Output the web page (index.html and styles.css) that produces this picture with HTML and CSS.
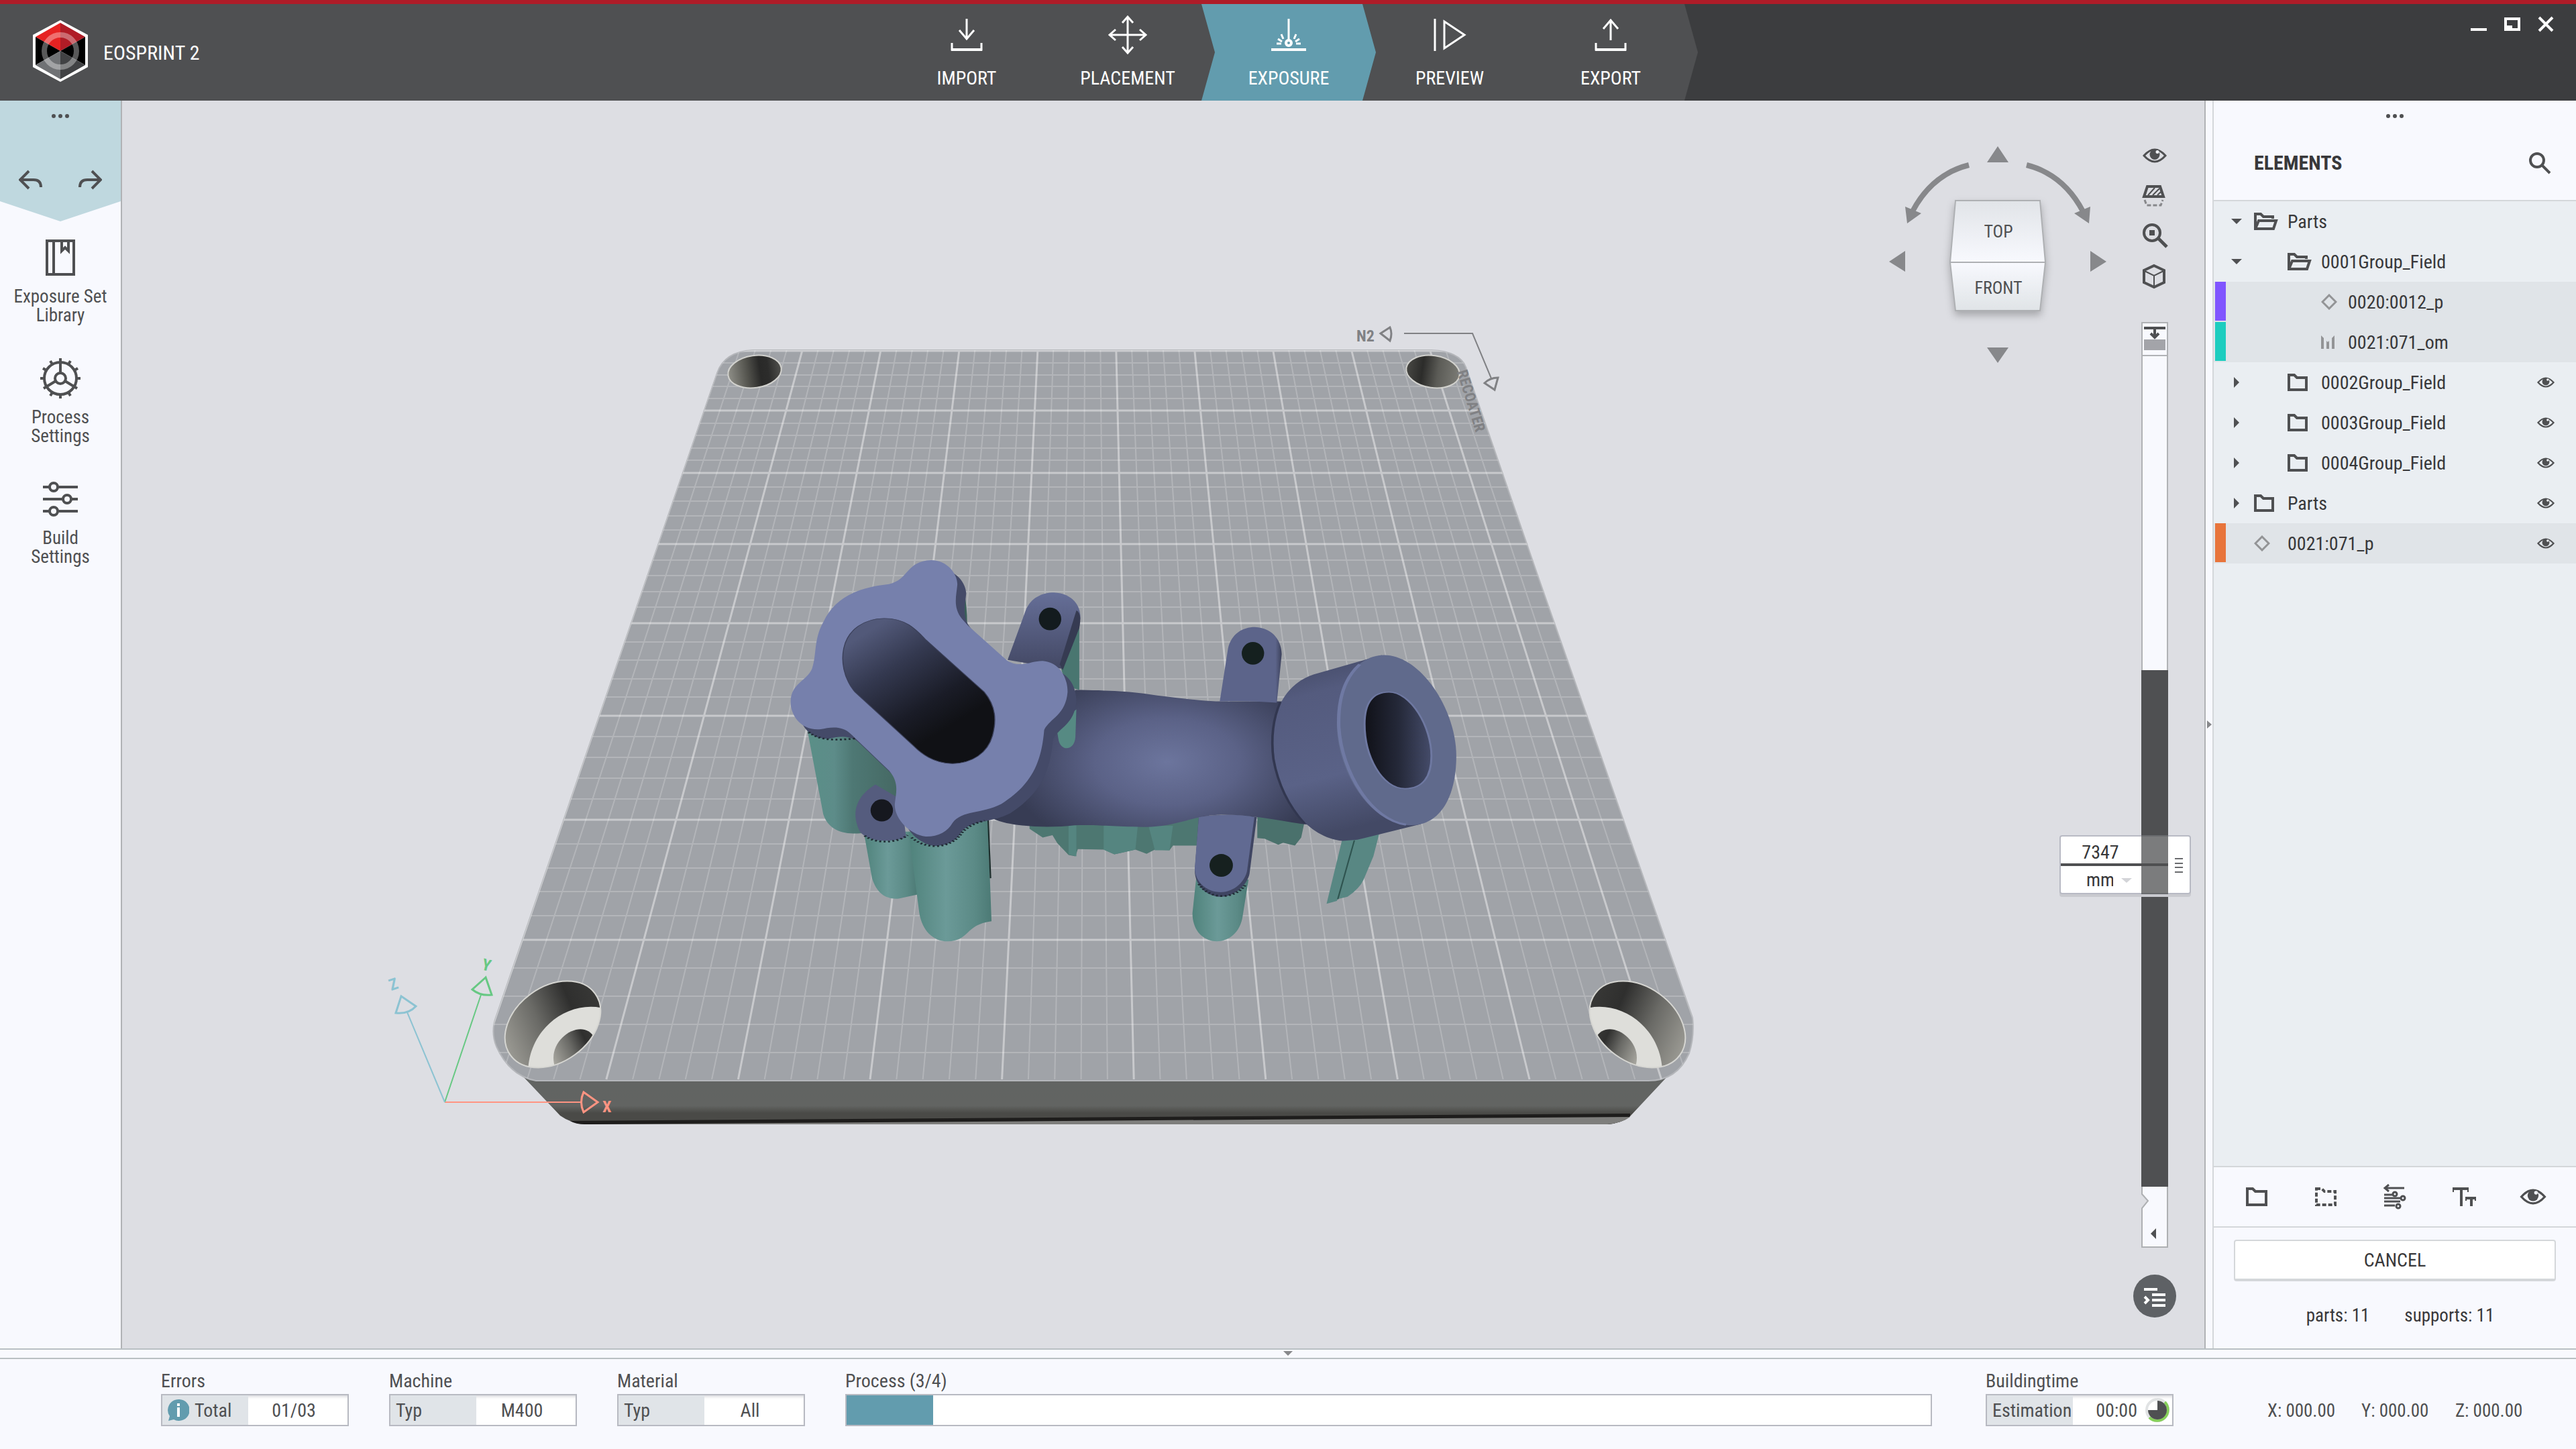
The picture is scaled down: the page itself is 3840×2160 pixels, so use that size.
FILE: index.html
```html
<!DOCTYPE html>
<html lang="en">
<head>
<meta charset="utf-8">
<meta name="viewport" content="width=device-width, initial-scale=1">
<title>EOSPRINT 2</title>
<link rel="stylesheet" href="styles.css">
</head>
<body>
<svg class="defs" width="0" height="0" aria-hidden="true">
  <symbol id="i-eye" viewBox="0 0 36 22"><path d="M2 11Q18-7 34 11Q18 29 2 11Z" fill="none" stroke="currentColor" stroke-width="3"/><circle cx="18" cy="9.500" r="7.500" fill="currentColor"/><circle cx="22" cy="5.500" r="2.500" fill="#eef0f4"/></symbol>
  <symbol id="i-folder" viewBox="0 0 36 26"><path d="M2 2H10L14 6H28V24H2Z" fill="none" stroke="currentColor" stroke-width="4"/></symbol>
  <symbol id="i-open" viewBox="0 0 36 26"><path d="M2 24V2H10L14 6H28V9M2 24L7 12H33L29 24Z" fill="none" stroke="currentColor" stroke-width="4"/></symbol>
  <symbol id="i-diamond" viewBox="0 0 24 24"><path d="M12 2L22 12L12 22L2 12Z" fill="none" stroke="#939496" stroke-width="3"/></symbol>
  <symbol id="i-support" viewBox="0 0 24 24"><path d="M0 2L4 6V22H0ZM8 10L10 12L12 10V22H8ZM20 2V22H16V6Z" fill="#939496"/></symbol>
  <symbol id="i-down" viewBox="0 0 16 16"><path d="M0 4H16L8 12Z" fill="currentColor"/></symbol>
  <symbol id="i-right" viewBox="0 0 16 16"><path d="M4 0V16L12 8Z" fill="currentColor"/></symbol>
  <symbol id="i-dots" viewBox="0 0 28 8"><circle cx="4" cy="4" r="3" fill="currentColor"/><circle cx="14" cy="4" r="3" fill="currentColor"/><circle cx="24" cy="4" r="3" fill="currentColor"/></symbol>
</svg>

<header class="topbar">
  <div class="brand">
    <svg class="logo" viewBox="0 0 84 94" aria-hidden="true">
      <path d="M42 1L83 23V71L42 93L1 71V23Z" fill="#fff"/>
      <path d="M42 5L79 26L42 47Z" fill="#b01c26"/><path d="M42 5L5 26L42 47Z" fill="#e62222"/>
      <path d="M5 26L42 47L5 68ZM79 26L42 47L79 68Z" fill="#000"/>
      <path d="M5 68L42 47V89Z" fill="#707275"/><path d="M79 68L42 47V89Z" fill="#414244"/>
      <circle cx="42" cy="47" r="24" fill="none" stroke="#fff" stroke-opacity=".35" stroke-width="8"/>
    </svg>
    <span class="brand-name">EOSPRINT 2</span>
  </div>
  <nav class="steps" aria-label="Workflow">
    <button class="step"><svg viewBox="0 0 60 60"><path d="M30 6V36M19 23L30 36L41 23M8 42V52H52V42" fill="none" stroke="#fff" stroke-width="3"/><path d="M7 50H53V54H7Z" fill="#fff"/></svg>IMPORT</button>
    <button class="step"><svg viewBox="0 0 60 60"><path d="M30 4V56M3 30H57M22 12L30 3L38 12M22 48L30 57L38 48M12 22L3 30L12 38M48 22L57 30L48 38" fill="none" stroke="#fff" stroke-width="3"/></svg>PLACEMENT</button>
    <button class="step step-on"><svg viewBox="0 0 60 60"><path d="M30 6V38M22 36L19 29M38 36L41 29M20 40L14 36M40 40L46 36M19 43H12M41 43H48" fill="none" stroke="#fff" stroke-width="3"/><circle cx="30" cy="42" r="4" fill="none" stroke="#fff" stroke-width="4"/><path d="M4 50H56V54H4Z" fill="#fff"/></svg>EXPOSURE</button>
    <button class="step"><svg viewBox="0 0 60 60"><path d="M8 6V54M22 10V50L52 30Z" fill="none" stroke="#fff" stroke-width="3"/></svg>PREVIEW</button>
    <button class="step"><svg viewBox="0 0 60 60"><path d="M30 8V38M19 21L30 8L41 21M8 42V52H52V42" fill="none" stroke="#fff" stroke-width="3"/><path d="M7 50H53V54H7Z" fill="#fff"/></svg>EXPORT</button>
  </nav>
  <div class="window-controls">
    <button aria-label="Minimize"><svg viewBox="0 0 24 24"><path d="M0 18H24V22H0Z" fill="#fff"/></svg></button>
    <button aria-label="Restore"><svg viewBox="0 0 24 24"><path d="M2 4H22V20H2ZM2 16H10V20" fill="none" stroke="#fff" stroke-width="4"/></svg></button>
    <button aria-label="Close"><svg viewBox="0 0 24 24"><path d="M2 2L22 22M22 2L2 22" fill="none" stroke="#fff" stroke-width="4"/></svg></button>
  </div>
</header>

<main class="workspace">
  <aside class="sidebar">
    <div class="history">
      <svg class="dots"><use href="#i-dots"/></svg>
      <div class="history-buttons">
        <button aria-label="Undo"><svg viewBox="0 0 36 32"><path d="M15 2L2 15L15 28M2 15H22Q33 15 33 26" fill="none" stroke="currentColor" stroke-width="4"/></svg></button>
        <button aria-label="Redo"><svg viewBox="0 0 36 32"><path d="M21 2L34 15L21 28M34 15H14Q3 15 3 26" fill="none" stroke="currentColor" stroke-width="4"/></svg></button>
      </div>
    </div>
    <button class="tool"><svg viewBox="0 0 60 60"><path d="M10 5H50V55H10ZM20 5V55M32 5V20L37 15L42 20V5" fill="none" stroke="currentColor" stroke-width="4"/></svg>Exposure Set Library</button>
    <button class="tool"><svg viewBox="0 0 60 60"><g fill="none" stroke="currentColor" stroke-width="4"><circle cx="30" cy="30" r="24"/><circle cx="30" cy="30" r="8"/><path d="M30 0V22M23 34L5 45M37 34L55 45M0 30H6M54 30H60M30 54V60M15 4L18 9M45 4L42 9M4 15L9 18M56 15L51 18M15 56L18 51M45 56L42 51"/></g></svg>Process Settings</button>
    <button class="tool"><svg viewBox="0 0 60 60"><g fill="none" stroke="currentColor" stroke-width="4"><path d="M4 12H13M27 12H56M4 30H33M47 30H56M4 48H13M27 48H56"/><circle cx="20" cy="12" r="6"/><circle cx="40" cy="30" r="6"/><circle cx="20" cy="48" r="6"/></g></svg>Build Settings</button>
  </aside>

  <section class="viewport" aria-label="Build platform">
    <svg class="scene" viewBox="182 150 3104 1860" preserveAspectRatio="xMidYMid slice">
      <defs>
        <linearGradient id="bore"><stop offset="0" stop-color="#8f8f88"/><stop offset=".35" stop-color="#55554f"/><stop offset=".6" stop-color="#292928"/><stop offset=".75" stop-color="#2c2c2b"/><stop offset="1" stop-color="#50504d"/></linearGradient>
        <linearGradient id="bore-r"><stop offset="0" stop-color="#484844"/><stop offset=".3" stop-color="#2c2c2a"/><stop offset=".6" stop-color="#5c5c57"/><stop offset="1" stop-color="#7b7b75"/></linearGradient>
        <linearGradient id="deep" x1="0" y1=".7" x2="1" y2=".3"><stop offset="0" stop-color="#a5a49d"/><stop offset=".4" stop-color="#6a6a66"/><stop offset=".7" stop-color="#2f2f2e"/><stop offset="1" stop-color="#3b3b39"/></linearGradient>
        <linearGradient id="front" x2="0" y2="1"><stop offset="0" stop-color="#616462"/><stop offset=".75" stop-color="#626462"/><stop offset=".85" stop-color="#4a4a47"/><stop offset="1" stop-color="#4a4a47"/></linearGradient>
        <radialGradient id="body" gradientUnits="userSpaceOnUse" cx="880" cy="820" r="330"><stop offset="0" stop-color="#6c759d"/><stop offset=".45" stop-color="#5b6287"/><stop offset="1" stop-color="#373c54"/></radialGradient>
        <linearGradient id="slot" gradientUnits="userSpaceOnUse" x1="240" y1="400" x2="490" y2="640"><stop offset="0" stop-color="#525979"/><stop offset=".35" stop-color="#343950"/><stop offset=".75" stop-color="#1a1c27"/><stop offset="1" stop-color="#101115"/></linearGradient>
        <linearGradient id="collar" x2=".2" y2="1"><stop offset="0" stop-color="#3f4560"/><stop offset=".25" stop-color="#545b7e"/><stop offset=".7" stop-color="#5a6287"/><stop offset="1" stop-color="#434965"/></linearGradient>
        <linearGradient id="pipe"><stop offset="0" stop-color="#101118"/><stop offset=".5" stop-color="#242838"/><stop offset="1" stop-color="#454c6a"/></linearGradient>
        <linearGradient id="lug" x2="0" y2="1"><stop offset="0" stop-color="#666f98"/><stop offset="1" stop-color="#434864"/></linearGradient>
        <linearGradient id="lug2"><stop offset="0" stop-color="#5c648a"/><stop offset=".9" stop-color="#5c648a"/><stop offset="1" stop-color="#3b405a"/></linearGradient>
        <linearGradient id="teal"><stop offset="0" stop-color="#4f827b"/><stop offset=".45" stop-color="#6b9a98"/><stop offset=".8" stop-color="#5b8a86"/><stop offset="1" stop-color="#4c7a75"/></linearGradient>
        <linearGradient id="teal-d"><stop offset="0" stop-color="#5a8f87"/><stop offset=".3" stop-color="#5d8c89"/><stop offset=".5" stop-color="#4e7874"/><stop offset="1" stop-color="#456863"/></linearGradient>
        <clipPath id="plate-clip"><path d="M1122 522H2134Q2176 524 2185 547L2293 860L2523 1517Q2526 1545 2518 1570Q2500 1611 2457 1611H799Q760 1604 740 1560Q732 1540 738 1520L1069 556Q1080 524 1122 522Z"/></clipPath>
        <clipPath id="hole-clip"><ellipse cx="824" cy="1527" rx="78" ry="56" transform="rotate(-36 824 1527)"/></clipPath>
        <path id="flange" d="M396 127C430 127 450 175 450 210C448 250 440 290 460 330L472 352L552 472C580 500 600 472 625 473C660 478 676 530 676 580C672 660 640 670 628 710C622 830 600 900 540 965C500 1000 460 985 440 1030C430 1060 410 1078 385 1077C350 1070 318 1010 322 960C325 920 330 890 310 850L232 725C215 695 190 700 170 708C130 715 108 660 108 615C108 550 140 545 152 500C162 450 155 400 175 340C200 250 250 220 310 209C350 195 345 130 396 127Z"/>
        <g id="bore-big">
          <g clip-path="url(#hole-clip)">
            <path d="M740 1450H910V1610H740Z" fill="url(#deep)"/>
            <path d="M900 1503C845 1490 787 1535 787 1600H910Z" fill="#dededa"/>
            <path d="M886 1547C868 1512 804 1555 832 1600H900Z" fill="url(#deep)"/>
          </g>
          <ellipse cx="824" cy="1527" rx="78" ry="56" transform="rotate(-36 824 1527)" fill="none" stroke="#d6d6d2" stroke-width="2"/>
        </g>
      </defs>

      <!-- build plate -->
      <path d="M742 1565L835 1663Q850 1674 872 1676H2396Q2418 1674 2430 1664L2518 1570L2457 1600H799Z" fill="url(#front)"/>
      <path d="M850 1671Q858 1676 872 1676H2396Q2418 1674 2430 1664V1660L850 1671Z" fill="#1e1d1c"/>
      <path d="M880 1676H2396Q2418 1674 2430 1665L880 1676Z" fill="#7e7e7c"/>
      <path d="M1122 522H2134Q2176 524 2185 547L2293 860L2523 1517Q2526 1545 2518 1570Q2500 1611 2457 1611H799Q760 1604 740 1560Q732 1540 738 1520L1069 556Q1080 524 1122 522Z" fill="#a0a3a8" stroke="#b4b6ba" stroke-width="2"/>
      <g clip-path="url(#plate-clip)" fill="none">
        <path id="grid-minor" stroke="#fff" stroke-opacity=".2" stroke-width="2"/>
        <path id="grid-major" stroke="#fff" stroke-opacity=".42" stroke-width="3"/>
      </g>
      <ellipse cx="1125" cy="554" rx="40" ry="24" transform="rotate(-8 1125 554)" fill="url(#bore)" stroke="#d2d2ce" stroke-width="2"/>
      <ellipse cx="2136" cy="554" rx="40" ry="24" transform="rotate(8 2136 554)" fill="url(#bore-r)" stroke="#d2d2ce" stroke-width="2"/>
      <use href="#bore-big"/>
      <use href="#bore-big" transform="translate(3265 0) scale(-1 1)"/>

      <!-- manifold with its supports -->
      <g transform="translate(1100 780) scale(.727 .4337)">
        <g>
          <path d="M140 690L175 1000C185 1050 210 1070 250 1066L330 1060V860L240 730Z" fill="url(#teal-d)"/>
          <path d="M258 1060L275 1220C285 1275 305 1294 330 1290L368 1276L352 1060Z" fill="url(#teal)"/>
          <path d="M448 180Q470 220 470 350L440 300Z" fill="#3a6059"/>
          <path d="M598 1030V1050L625 1080L645 1072L655 1100L678 1140L692 1145L697 1120L750 1122L772 1138L815 1122L838 1136L855 1122L885 1124L892 1108L942 1108L950 1010Z" fill="#4d7771"/>
          <path d="M678 1038H694V1145L678 1138ZM750 1038H820L815 1122L772 1138L750 1122ZM842 1040H892L885 1124H855Z" fill="#558580"/>
          <path d="M1065 1000V1082L1080 1084L1108 1105L1118 1098L1142 1108L1155 1080L1162 1025Z" fill="#4a716c"/>
          <path d="M940 1215L932 1340C932 1465 1025 1470 1035 1350L1047 1225Z" fill="url(#teal)"/>
          <path d="M1240 1080L1207 1308L1228 1298L1230 1292L1250 1284Q1275 1255 1283 1225L1303 1145L1316 1060Z" fill="#588783"/>
          <path d="M1264 1090L1230 1292" stroke="#2f5450" stroke-width="3"/>
        </g>
        <path d="M692 573C760 574 810 578 860 592C910 602 950 610 980 612H1120L1170 1036C1130 1030 1060 1000 990 1002C930 1005 900 1045 830 1044C760 1042 740 1036 690 1038C640 1048 560 1045 523 1015C560 960 620 850 640 720Z" fill="url(#body)"/>
        <path d="M988 612L1005 430C1012 380 1035 357 1060 357C1100 360 1115 410 1115 450L1105 617Q1045 608 988 612Z" fill="url(#lug2)"/>
        <ellipse cx="1056" cy="447" rx="23" ry="39" fill="#15201f"/>
        <path d="M700 330L700 573L672 560L660 480Z" fill="#497670"/>
        <path d="M694 640L692 735C690 785 660 785 657 740L652 690Z" fill="#568a83"/>
        <path d="M553 470L590 300C600 255 625 238 648 238C690 242 704 290 702 330L664 500L625 490Z" fill="url(#lug)"/>
        <path d="M694 300Q706 310 700 360L666 505L660 485Z" fill="#363b52"/>
        <ellipse cx="640" cy="329" rx="23" ry="39" fill="#131b1e"/>
        <path d="M1320 453L1180 520C1110 560 1090 680 1100 800C1110 960 1170 1080 1240 1092L1270 1088L1400 1034Z" fill="url(#collar)"/>
        <path d="M1112 615Q1090 700 1098 810Q1112 940 1162 1032" fill="none" stroke="#323750" stroke-width="5"/>
        <path d="M1325 453C1400 453 1473 640 1473 800C1473 940 1440 1038 1380 1038C1300 1038 1228 860 1228 690C1228 550 1270 453 1325 453Z" fill="#606a8c"/>
        <path d="M1275 485C1245 530 1230 600 1232 700C1238 860 1300 1020 1370 1036" fill="none" stroke="#6f79a3" stroke-width="7"/>
        <path d="M1335 580C1380 580 1422 700 1422 800C1422 870 1405 912 1368 912C1320 912 1285 800 1285 690C1285 620 1300 580 1335 580Z" fill="url(#pipe)" stroke="#6e78a1" stroke-width="4"/>
        <path d="M282 898C240 940 232 1000 250 1060C265 1090 300 1102 345 1080L335 950Z" fill="#555c7e"/>
        <ellipse cx="295" cy="987" rx="23" ry="38" fill="#16181f"/>
        <path d="M945 1010L937 1190C935 1240 960 1284 990 1284C1020 1284 1045 1240 1049 1205L1064 1010C1030 1000 985 1000 945 1010Z" fill="#3f4562"/>
        <path d="M945 1010L937 1180C935 1230 960 1268 990 1268C1018 1268 1040 1230 1044 1195L1059 1010C1030 1000 985 1000 945 1010Z" fill="#616a92"/>
        <ellipse cx="991" cy="1176" rx="24" ry="39" fill="#16201f"/>
        <path d="M350 1060L372 1340C378 1400 400 1437 430 1437C475 1437 465 1380 520 1368L512 1010L440 1050Z" fill="url(#teal)"/>
        <path d="M513 1018L518 1220" stroke="#1c2e2c" stroke-width="3"/>
        <use href="#flange" transform="translate(18 32)" fill="#444a68"/>
        <use href="#flange" fill="#7680ac"/>
        <path d="M300 327C345 327 365 365 385 400L505 580C530 630 530 680 522 730C512 790 480 825 440 826C400 825 375 790 360 765L240 580C215 530 212 470 217 430C225 365 260 327 300 327Z" fill="url(#slot)" stroke="#3b405a" stroke-width="2"/>
        <g fill="none" stroke="#1f2a33" stroke-width="6" stroke-dasharray="4 5">
          <path d="M145 718C170 750 205 745 240 740"/><path d="M260 1074C285 1106 330 1096 348 1072"/><path d="M356 1080C390 1128 440 1115 460 1062Q475 1035 506 1022"/><path d="M945 1240C970 1298 1020 1292 1042 1240"/>
        </g>
      </g>

      <!-- axes -->
      <g fill="none" stroke-width="2">
        <g stroke="#ff9482"><path d="M663 1643H866"/><path d="M870 1628Q863 1643 870 1658L891 1643Z" stroke-width="3"/></g>
        <g stroke="#67c883"><path d="M663 1643L717 1483"/><path d="M724 1457L704 1475Q716 1485 733 1483Z" stroke-width="3"/></g>
        <g stroke="#8cc3d2"><path d="M663 1643L607 1509"/><path d="M598 1485L620 1500Q609 1512 590 1510Z" stroke-width="3"/></g>
        <g stroke="#808184"><path d="M2093 497H2195L2223 564"/><path d="M2058 497L2072 488Q2076 497 2072 508ZM2213 571Q2221 563 2233 563L2228 581Z" stroke-width="3"/></g>
      </g>
      <g class="scene-text">
        <text x="898" y="1658" fill="#ff9482">X</text>
        <text x="717" y="1445" fill="#67c883" transform="rotate(14 717 1445)">Y</text>
        <text x="583" y="1477" fill="#8cc3d2" transform="rotate(-18 583 1477)">Z</text>
        <text x="2022" y="509" fill="#808184">N2</text>
        <text class="small" x="2172" y="554" fill="#808184" transform="rotate(73 2172 554)">RECOATER</text>
      </g>
    </svg>

    <svg class="nav-cube" viewBox="2806 200 344 350" role="img" aria-label="View cube">
      <defs>
        <linearGradient id="cube-t" x2="0" y2="1"><stop offset="0" stop-color="#e1e4e8"/><stop offset="1" stop-color="#f8f9fe"/></linearGradient>
        <linearGradient id="cube-f" x2="0" y2="1"><stop offset="0" stop-color="#f8f9fe"/><stop offset="1" stop-color="#e0e4e7"/></linearGradient>
      </defs>
      <g fill="#87888b"><path d="M2978 218L2994 242H2962ZM2978 541L2994 518H2962ZM2816 390L2840 374V405ZM3140 390L3116 374V405ZM3116 308L3092 318L3114 333ZM2840 308L2864 318L2843 333Z"/></g>
      <path d="M3021 246Q3076 260 3105 315M2935 246Q2880 260 2851 315" fill="none" stroke="#87888b" stroke-width="8"/>
      <g class="cube" stroke="#aeb0b3" stroke-width="2"><path d="M2907 391H3049L3041 463H2915Z" fill="url(#cube-f)"/><path d="M2915 299H3041L3049 391H2907Z" fill="url(#cube-t)"/></g>
      <text x="2979" y="354">TOP</text><text x="2979" y="438">FRONT</text>
    </svg>

    <div class="view-tools">
      <button aria-label="Visibility"><svg viewBox="0 0 40 40"><use href="#i-eye" x="2" y="9" width="36" height="22"/></svg></button>
      <button aria-label="Clipping"><svg viewBox="0 0 40 40"><path d="M9 6H28L33 21H4Z" fill="none" stroke="currentColor" stroke-width="4"/><path d="M10 19L20 8M17 19L27 9M24 19L29 14" stroke="currentColor" stroke-width="2"/><path d="M5 26L8 34H29L32 26" fill="none" stroke="#87888b" stroke-width="3" stroke-dasharray="6 3"/></svg></button>
      <button aria-label="Zoom to fit"><svg viewBox="0 0 40 40"><circle cx="16" cy="15" r="12" fill="none" stroke="currentColor" stroke-width="4"/><path d="M12 11H20V19H12Z" fill="currentColor"/><path d="M25 23L38 36" stroke="currentColor" stroke-width="5"/></svg></button>
      <button aria-label="Isometric view"><svg viewBox="0 0 40 40"><path d="M19 4L34 11V29L19 36L4 29V11Z" fill="none" stroke="currentColor" stroke-width="4"/><path d="M5 12L19 19L33 12M19 19V35" fill="none" stroke="currentColor" stroke-width="2"/></svg></button>
    </div>

    <div class="layer-slider">
      <button class="slider-cap" aria-label="Collapse"><svg viewBox="0 0 36 47"><path d="M2 5H34V9H2Z" fill="#4f5052"/><path d="M18 8V20M12 15L18 21L24 15" fill="none" stroke="#4f5052" stroke-width="4"/><path d="M2 24H34V40H2Z" fill="#a3a4a9"/></svg></button>
      <div class="slider-above"></div>
      <div class="slider-below">
        <div class="layer-popup">
          <input class="layer-value" type="text" value="7347" aria-label="Layer height">
          <div class="layer-rule"></div>
          <div class="layer-unit"><select aria-label="Unit"><option>mm</option></select><svg viewBox="0 0 16 8"><path d="M0 1H16L8 8Z" fill="#d3d4d8"/></svg></div>
          <svg class="grip" viewBox="0 0 12 22"><path d="M0 1H12M0 8H12M0 14H12M0 21H12" stroke="#6a6b6e" stroke-width="2"/></svg>
        </div>
      </div>
      <button class="slider-foot" aria-label="Previous"><svg viewBox="0 0 40 91"><path d="M1 0V11L10 21L1 32V90H39V0" fill="#f8f9fe" stroke="#aeb0b3" stroke-width="2"/><path d="M22 62V78L14 70Z" fill="#4f5052"/></svg></button>
    </div>
    <button class="round" aria-label="Layer list"><svg viewBox="0 0 64 64"><path d="M16 22H36M28 30H48M28 38H48M28 46H48" stroke="#fff" stroke-width="4"/><path d="M17 33L22 38L17 43" fill="none" stroke="#fff" stroke-width="4"/></svg></button>
  </section>

  <div class="splitter-v"><svg viewBox="0 0 8 12"><path d="M1 0V12L8 6Z" fill="#87888b"/></svg></div>

  <aside class="panel">
    <div class="panel-head">
      <svg class="dots"><use href="#i-dots"/></svg>
      <div class="panel-title"><h2>ELEMENTS</h2><button aria-label="Search"><svg viewBox="0 0 34 34"><circle cx="13" cy="13" r="10" fill="none" stroke="currentColor" stroke-width="4"/><path d="M20 20L32 32" stroke="currentColor" stroke-width="4"/></svg></button></div>
    </div>
    <ul class="tree">
      <li class="row"><i class="bar"></i><button class="toggle" aria-label="Collapse"><svg><use href="#i-down"/></svg></button><svg class="kind"><use href="#i-open"/></svg><span>Parts</span></li>
      <li class="row lv2"><i class="bar"></i><button class="toggle" aria-label="Collapse"><svg><use href="#i-down"/></svg></button><svg class="kind"><use href="#i-open"/></svg><span>0001Group_Field</span></li>
      <li class="row lv3 selected"><i class="bar violet"></i><i class="toggle"></i><svg class="kind leaf"><use href="#i-diamond"/></svg><span>0020:0012_p</span></li>
      <li class="row lv3 selected"><i class="bar teal"></i><i class="toggle"></i><svg class="kind leaf"><use href="#i-support"/></svg><span>0021:071_om</span></li>
      <li class="row lv2"><i class="bar"></i><button class="toggle" aria-label="Expand"><svg><use href="#i-right"/></svg></button><svg class="kind"><use href="#i-folder"/></svg><span>0002Group_Field</span><button class="eye" aria-label="Hide"><svg><use href="#i-eye"/></svg></button></li>
      <li class="row lv2"><i class="bar"></i><button class="toggle" aria-label="Expand"><svg><use href="#i-right"/></svg></button><svg class="kind"><use href="#i-folder"/></svg><span>0003Group_Field</span><button class="eye" aria-label="Hide"><svg><use href="#i-eye"/></svg></button></li>
      <li class="row lv2"><i class="bar"></i><button class="toggle" aria-label="Expand"><svg><use href="#i-right"/></svg></button><svg class="kind"><use href="#i-folder"/></svg><span>0004Group_Field</span><button class="eye" aria-label="Hide"><svg><use href="#i-eye"/></svg></button></li>
      <li class="row"><i class="bar"></i><button class="toggle" aria-label="Expand"><svg><use href="#i-right"/></svg></button><svg class="kind"><use href="#i-folder"/></svg><span>Parts</span><button class="eye" aria-label="Hide"><svg><use href="#i-eye"/></svg></button></li>
      <li class="row selected"><i class="bar orange"></i><i class="toggle"></i><svg class="kind leaf wide"><use href="#i-diamond"/></svg><span>0021:071_p</span><button class="eye" aria-label="Hide"><svg><use href="#i-eye"/></svg></button></li>
    </ul>
    <div class="panel-tools">
      <button aria-label="New folder"><svg viewBox="0 0 40 40"><path d="M6 8H14L18 12H34V32H6Z" fill="none" stroke="currentColor" stroke-width="4"/></svg></button>
      <button aria-label="Ungroup"><svg viewBox="0 0 40 40"><path d="M6 8H14L18 12H34V32H6Z" fill="none" stroke="currentColor" stroke-width="4" stroke-dasharray="6 3"/></svg></button>
      <button aria-label="Gas flow"><svg viewBox="0 0 40 40"><g fill="none" stroke="currentColor" stroke-width="3"><path d="M34 7H6M11 2L5 7L11 12M4 17H17M4 22H28M4 27H28M4 33H20"/><circle cx="20" cy="16" r="3"/><circle cx="32" cy="22" r="3"/><circle cx="25" cy="34" r="3"/></g></svg></button>
      <button aria-label="Labels"><svg viewBox="0 0 40 40"><path d="M4 8H26M16 8V34M22 22H38M31 22V34" fill="none" stroke="currentColor" stroke-width="4"/><path d="M4 6V13M26 6V13M23 20V26M37 20V26" stroke="currentColor" stroke-width="2"/></svg></button>
      <button aria-label="Visibility"><svg viewBox="0 0 40 40"><use href="#i-eye" x="0" y="8" width="40" height="24"/></svg></button>
    </div>
    <div class="panel-foot">
      <button class="cancel">CANCEL</button>
      <p class="counts"><span>parts: 11</span><span>supports: 11</span></p>
    </div>
  </aside>
</main>

<div class="splitter-h"><svg viewBox="0 0 14 8"><path d="M0 0H14L7 7Z" fill="#87888b"/></svg></div>

<footer class="status">
  <div class="field"><label for="f-err">Errors</label><div class="box"><span class="box-key"><svg viewBox="0 0 32 32"><path d="M16 0A16 16 0 1 1 9 30L1 32L3 25A16 16 0 0 1 16 0Z" fill="#629cae"/><path d="M14 6H18V10H14ZM14 12H18V26H14Z" fill="#fff"/></svg><span>Total</span></span><input id="f-err" value="01/03" readonly></div></div>
  <div class="field"><label for="f-mac">Machine</label><div class="box"><span class="box-key"><span>Typ</span></span><input id="f-mac" value="M400" readonly></div></div>
  <div class="field"><label for="f-mat">Material</label><div class="box"><span class="box-key"><span>Typ</span></span><input id="f-mat" value="All" readonly></div></div>
  <div class="field process"><label for="f-pro">Process (3/4)</label><progress id="f-pro" value="8" max="100"></progress></div>
  <div class="field time"><label for="f-time">Buildingtime</label><div class="box"><span class="box-key"><span>Estimation</span></span><input id="f-time" value="00:00" readonly><svg class="clock" viewBox="0 0 36 36"><circle cx="18" cy="18" r="16" fill="none" stroke="#e1e3e4" stroke-width="4"/><path d="M29 6A16 16 0 0 1 6 29" fill="none" stroke="#86cf5a" stroke-width="4"/><path d="M18 18H4A14 14 0 1 0 18 4Z" fill="#4f5052"/></svg></div></div>
  <div class="coords"><span>X: 000.00</span><span>Y: 000.00</span><span>Z: 000.00</span></div>
</footer>
<script src="script.js"></script>
</body>
</html>
```

FILE: styles.css
```css
* { box-sizing: border-box; }

:root {
  --ink: #4f5052;
  --paper: #f8f9fe;
  --line: #d4d7da;
  --edge: #b0b2b5;
  --accent: #629cae;
}

body {
  margin: 0;
  min-height: 100vh;
  display: flex;
  flex-direction: column;
  background: var(--paper);
  color: var(--ink);
  font: 28px/36px "Liberation Sans Narrow", "Arial Narrow", "Roboto Condensed", "Liberation Sans", sans-serif;
}

button, input, select { font: inherit; color: inherit; border: 0; padding: 0; margin: 0; background: none; border-radius: 0; }
svg { display: block; flex: none; }
.defs { position: absolute; }

/* top bar */
.topbar {
  display: grid;
  grid-template-columns: 1fr auto 1fr;
  height: 150px;
  border-top: 6px solid #ae1c28;
  background: #3c3d3f;
  color: #fff;
}
.brand { display: flex; align-items: center; gap: 22px; padding-left: 48px; background: var(--ink); font-size: 30px; }
.logo { width: 84px; height: 94px; margin-bottom: 4px; }
.brand-name { padding-top: 2px; }
.steps { display: flex; padding-left: 2px; background: var(--ink); clip-path: polygon(0 0, calc(100% - 20px) 0, 100% 50%, calc(100% - 20px) 100%, 0 100%); }
.step { width: 260px; margin-left: -20px; padding-top: 16px; display: flex; flex-direction: column; align-items: center; gap: 17px; }
.step:first-child { margin-left: 0; }
.step svg { width: 60px; height: 60px; }
.step-on { background: var(--accent); clip-path: polygon(0 0, calc(100% - 20px) 0, 100% 50%, calc(100% - 20px) 100%, 0 100%, 20px 50%); }
.window-controls { display: flex; justify-content: flex-end; padding: 18px 20px 0 0; }
.window-controls button { width: 50px; height: 24px; display: flex; justify-content: center; }
.window-controls svg { width: 24px; height: 24px; }

.workspace { flex: 1; display: grid; grid-template-columns: 182px minmax(0, 1fr) 14px 540px; }
.dots { width: 28px; height: 8px; }

/* left tools */
.sidebar { border-right: 2px solid var(--edge); display: flex; flex-direction: column; }
.history {
  height: 180px;
  padding-top: 19px;
  display: flex;
  flex-direction: column;
  align-items: center;
  gap: 76px;
  background: #bfd8df;
  clip-path: polygon(0 0, 100% 0, 100% 150px, 50% 100%, 0 150px);
}
.history-buttons { align-self: stretch; display: flex; justify-content: space-between; padding: 0 28px; }
.history-buttons svg { width: 36px; height: 32px; }
.tool { height: 180px; padding: 24px 20px 0; display: flex; flex-direction: column; align-items: center; gap: 14px; font-size: 27px; line-height: 28px; }
.tool svg { width: 60px; height: 60px; }

/* 3D view */
.viewport { position: relative; overflow: hidden; background: #dddee3; }
.scene { position: absolute; inset: 0; width: 100%; height: 100%; }
.scene-text { font-size: 24px; font-weight: 700; }
.scene-text .small { font-size: 22px; }
.nav-cube { position: absolute; top: 50px; right: 136px; width: 344px; height: 350px; }
.nav-cube text { font-size: 26px; fill: var(--ink); text-anchor: middle; }
.cube { filter: drop-shadow(0 6px 6px rgba(0, 0, 0, .25)); }
.view-tools { position: absolute; top: 52px; right: 54px; display: flex; flex-direction: column; }
.view-tools button { width: 40px; height: 60px; display: flex; align-items: center; }
.view-tools svg { width: 40px; height: 40px; }

.layer-slider { position: absolute; top: 330px; right: 54px; bottom: 150px; width: 40px; display: flex; flex-direction: column; }
.slider-cap { height: 51px; border: 2px solid var(--edge); background: var(--paper); }
.slider-above { flex: 468; border: solid var(--edge); border-width: 0 2px; background: var(--paper); }
.slider-below { flex: 770; position: relative; background: var(--ink); }
.slider-foot svg { width: 40px; height: 91px; }
.layer-popup {
  position: absolute;
  top: 32%;
  right: -34px;
  width: 196px;
  height: 88px;
  display: flex;
  flex-direction: column;
  border: 2px solid #b8bac4;
  border-radius: 4px;
  background: #fff;
  box-shadow: 0 4px 0 #c9cacf;
  color: #38383a;
}
.layer-popup::after { content: ""; position: absolute; top: -2px; bottom: -2px; left: 120px; width: 40px; background: rgba(79, 80, 82, .75); }
.layer-value { width: 118px; height: 40px; padding-top: 6px; text-align: center; }
.layer-rule { width: 160px; height: 4px; background: var(--ink); }
.layer-unit { width: 118px; height: 40px; display: flex; align-items: center; gap: 12px; padding: 2px 0 0 38px; }
.layer-unit select { appearance: none; width: 40px; }
.layer-unit svg { width: 16px; height: 8px; }
.grip { position: absolute; right: 10px; top: 32px; width: 12px; height: 22px; }
.round { position: absolute; right: 42px; bottom: 46px; width: 64px; height: 64px; border-radius: 50%; background: #5e6165; }
.round svg { width: 64px; height: 64px; }

.splitter-v { display: flex; align-items: center; justify-content: center; border: solid var(--edge); border-width: 0 2px; border-right-color: var(--line); }
.splitter-v svg { width: 8px; height: 12px; }
.splitter-h { height: 16px; display: flex; align-items: center; justify-content: center; border: solid #b9c0c3; border-width: 2px 0; }
.splitter-h svg { width: 14px; height: 8px; }

/* elements panel */
.panel { display: flex; flex-direction: column; color: #38383a; }
.panel button, .panel svg { color: var(--ink); }
.panel-head { height: 150px; padding-top: 19px; border-bottom: 2px solid var(--line); display: flex; flex-direction: column; align-items: center; }
.panel-title { align-self: stretch; display: flex; justify-content: space-between; align-items: center; padding: 48px 37px 0 60px; }
.panel-title h2 { margin: 0; font-size: 30px; line-height: 36px; }
.panel-title svg { width: 34px; height: 34px; }
.tree { flex: 1; margin: 0; padding: 0; list-style: none; background: #eaeef2; }
.row { height: 60px; display: flex; align-items: center; padding: 0 32px 0 2px; }
.row span, .box-key span { padding-top: 2px; }
.row.selected { background: #e0e4e8; }
.bar { width: 16px; height: 58px; margin-bottom: 2px; }
.violet { background: #8055ff; }
.teal { background: #1dcdbf; }
.orange { background: #e8743b; }
.toggle { width: 32px; margin-right: 10px; display: flex; justify-content: center; }
.toggle svg { width: 16px; height: 16px; }
.lv2 .toggle { margin-right: 60px; }
.lv3 .toggle { margin-right: 110px; }
.kind { width: 36px; height: 26px; margin-right: 14px; }
.leaf { width: 24px; height: 24px; margin-right: 16px; }
.wide { margin-right: 26px; }
.eye { margin-left: auto; }
.eye svg { width: 26px; height: 16px; }
.panel-tools { height: 92px; border: solid var(--line); border-width: 2px 0; display: flex; justify-content: space-between; align-items: center; padding: 0 44px; }
.panel-tools svg { width: 40px; height: 40px; }
.panel-foot { height: 180px; padding: 18px 30px 0; }
.cancel { display: block; width: 100%; height: 62px; padding-top: 2px; border: 2px solid var(--line); border-bottom-width: 4px; border-radius: 4px; background: #fff; }
.panel .cancel { color: #38383a; }
.counts { display: flex; justify-content: center; gap: 52px; margin: 33px 0 0; padding-left: 16px; font-size: 27px; }

/* status bar */
.status { height: 134px; display: flex; padding: 15px 80px 0 240px; }
.field { width: 280px; margin-right: 60px; display: flex; flex-direction: column; gap: 1px; }
.process { flex: 1; margin-right: 80px; }
.time { margin-right: 140px; }
.box { height: 48px; display: flex; align-items: center; border: 2px solid #b8bac2; background: #fff; box-shadow: inset 0 4px 4px -2px #d5d6da; }
.box-key { width: 128px; height: 100%; padding-left: 8px; display: flex; align-items: center; gap: 8px; background: #e0e4e8; }
.box-key svg { width: 32px; height: 32px; }
.box input { flex: 1; min-width: 0; padding: 2px 12px 0 0; text-align: center; }
.time .box input { padding: 2px 6px 0 0; text-align: right; }
.clock { width: 36px; height: 36px; margin: 0 4px 0 6px; }
progress { appearance: none; display: block; width: 100%; height: 48px; border: 2px solid #b8bac2; background: #fff; }
progress::-webkit-progress-bar { background: #fff; }
progress::-webkit-progress-value { background: var(--accent); }
.coords { display: flex; gap: 40px; padding-top: 44px; white-space: nowrap; font-size: 27px; }
.coords span { width: 100px; }
```

FILE: script.js
```js
// Perspective grid of the build plate: five minor cells per major cell.
const rows = [523, 612, 705, 811, 929, 1067, 1222, 1401, 1611];
let minor = "";
let major = "";

for (let i = 0; i < rows.length - 1; i++) {
  for (let k = 0; k < 5; k++) {
    const y = Math.round(rows[i] + (rows[i + 1] - rows[i]) * k / 5);
    const line = `M700 ${y}H2560`;
    if (k === 0) major += line; else minor += line;
  }
}
for (let j = -6; j <= 46; j++) {
  const line = `M${1196 + 23.39 * j} 522L${903.8 + 39.32 * j} 1609`;
  if (j % 5 === 0) major += line; else minor += line;
}
document.getElementById("grid-minor").setAttribute("d", minor);
document.getElementById("grid-major").setAttribute("d", major);
```
